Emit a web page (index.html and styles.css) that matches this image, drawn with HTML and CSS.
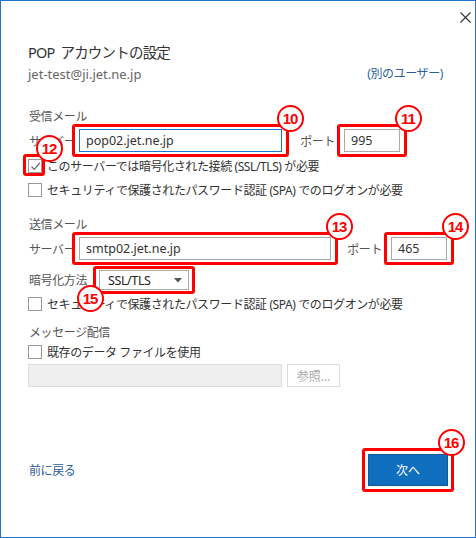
FILE: index.html
```html
<!DOCTYPE html>
<html lang="ja">

<head>
    <meta charset="UTF-8">
    <meta name="viewport" content="width=device-width, initial-scale=1.0">
    <title>POP アカウントの設定</title>
    <link rel="stylesheet" href="styles.css">
</head>

<body>
    <div class="window">
        <div class="titlebar">
            <svg class="close" width="11" height="11" viewBox="0 0 11 11">
                <path d="M0.5 0.5 L10.5 10.5 M10.5 0.5 L0.5 10.5" stroke="#333" stroke-width="1.1" fill="none" />
            </svg>
        </div>

        <h1 class="title">POP アカウントの設定</h1>
        <div class="account">
            <span class="email">jet-test@ji.jet.ne.jp</span>
            <a class="link" href="#">(別のユーザー)</a>
        </div>

        <!-- 受信メール -->
        <div class="section-label recv-label">受信メール</div>
        <div class="row">
            <span class="field-label">サーバー</span>
            <div class="mark">
                <input class="text focus w-recv" type="text" value="pop02.jet.ne.jp">
                <span class="badge">10</span>
            </div>
            <span class="port-label">ポート</span>
            <div class="mark">
                <input class="text w-port" type="text" value="995">
                <span class="badge">11</span>
            </div>
        </div>
        <div class="check-row first">
            <span class="check-wrap">
                <span class="checkbox checked">
                    <svg width="11" height="11" viewBox="0 0 11 11">
                        <path d="M1.5 5.5 L4.3 8.3 L9.8 2" stroke="#666" stroke-width="1.2" fill="none" />
                    </svg>
                </span>
                <span class="check-mark"><span class="badge">12</span></span>
            </span>
            <span>このサーバーでは暗号化された接続 (SSL/TLS) が必要</span>
        </div>
        <div class="check-row">
            <span class="checkbox"></span>
            <span>セキュリティで保護されたパスワード認証 (SPA) でのログオンが必要</span>
        </div>

        <!-- 送信メール -->
        <div class="section-label send-label">送信メール</div>
        <div class="row">
            <span class="field-label">サーバー</span>
            <div class="mark">
                <input class="text w-send" type="text" value="smtp02.jet.ne.jp">
                <span class="badge">13</span>
            </div>
            <span class="port-label">ポート</span>
            <div class="mark">
                <input class="text w-port" type="text" value="465">
                <span class="badge">14</span>
            </div>
        </div>
        <div class="row select-row">
            <span class="field-label wide">暗号化方法</span>
            <div class="mark">
                <div class="select">
                    <span>SSL/TLS</span>
                    <svg width="8" height="5" viewBox="0 0 8 5">
                        <path d="M0 0 H8 L4 4.5 Z" fill="#555" />
                    </svg>
                </div>
                <span class="badge bottom-left">15</span>
            </div>
        </div>
        <div class="check-row third">
            <span class="checkbox"></span>
            <span>セキュリティで保護されたパスワード認証 (SPA) でのログオンが必要</span>
        </div>

        <!-- メッセージ配信 -->
        <div class="section-label msg-label">メッセージ配信</div>
        <div class="check-row">
            <span class="checkbox"></span>
            <span>既存のデータ ファイルを使用</span>
        </div>
        <div class="file-row">
            <input class="text disabled" type="text" disabled>
            <button class="browse" disabled>参照...</button>
        </div>

        <div class="footer">
            <a class="link back" href="#">前に戻る</a>
            <div class="mark">
                <button class="next">次へ</button>
                <span class="badge last">16</span>
            </div>
        </div>
    </div>
</body>

</html>
```

FILE: styles.css
```css
* {
    margin: 0;
    padding: 0;
    box-sizing: border-box;
}

html,
body {
    height: 100%;
}

body {
    font-family: "Noto Sans", "Noto Sans CJK JP", sans-serif;
    font-size: 12px;
    color: #333;
    background: #fff;
}

.window {
    width: 476px;
    height: 538px;
    border: 1px solid #1f74c8;
    padding: 0 21px 45px 27px;
    display: flex;
    flex-direction: column;
    letter-spacing: -0.4px;
}

.titlebar {
    height: 41px;
    display: flex;
    justify-content: flex-end;
    padding-top: 11px;
    margin-right: -17px;
}

.close {
    display: block;
}

.title {
    font-size: 14.5px;
    font-weight: normal;
    line-height: 20px;
    color: #333;
    letter-spacing: -0.8px;
    word-spacing: 3px;
}

.account {
    display: flex;
    justify-content: space-between;
    line-height: 18px;
    margin-top: 3px;
    padding-right: 11px;
}

.email {
    color: #666;
    font-size: 13px;
    letter-spacing: 0;
}

.link {
    color: #2e5e9e;
    text-decoration: none;
    font-size: 12px;
}

.section-label {
    color: #555;
    line-height: 14px;
    padding-left: 1px;
}

.recv-label {
    margin-top: 27px;
}

.send-label {
    margin-top: 16px;
}

.msg-label {
    margin-top: 10px;
}

.row {
    display: flex;
    align-items: center;
}

.select-row {
    margin-top: 1px;
}

.field-label {
    width: 44px;
    color: #555;
    padding-left: 1px;
    white-space: nowrap;
}

.field-label.wide {
    width: 65px;
}

.port-label {
    width: 48px;
    text-align: right;
    padding-right: 2px;
    color: #555;
}

.mark {
    position: relative;
    border: 3px solid #f00;
    border-radius: 3px;
    padding: 2px 4px;
}

.select-row .mark {
    padding: 1px 3px;
}

.footer .mark {
    padding: 3px;
}

.text {
    display: block;
    height: 23px;
    border: 1px solid #a9a9a9;
    padding: 0 6px;
    font-family: "Noto Sans", "Noto Sans CJK JP", sans-serif;
    font-size: 12.5px;
    color: #333;
    background: #fff;
    outline: none;
}

.text.focus {
    border-color: #1b78d0;
}

.w-recv {
    width: 203px;
}

.w-send {
    width: 252px;
}

.w-port {
    width: 56px;
}

.badge {
    position: absolute;
    top: -22px;
    right: -18px;
    width: 27px;
    height: 27px;
    border: 2px solid #f00;
    border-radius: 50%;
    background: #fff;
    color: #f00;
    font-family: "Liberation Sans", sans-serif;
    font-weight: bold;
    font-size: 15px;
    letter-spacing: -1px;
    line-height: 23px;
    text-align: center;
    padding-right: 1px;
}

.badge.bottom-left {
    top: auto;
    right: auto;
    bottom: -21px;
    left: -19px;
}

.badge.last {
    right: -14px;
}

.check-row {
    display: flex;
    align-items: center;
    height: 24px;
    gap: 5px;
}

.check-row.first {
    margin-top: -3px;
}

.check-row.third {
    margin-top: -2px;
}

.check-wrap {
    position: relative;
    display: flex;
}

.checkbox {
    width: 14px;
    height: 14px;
    border: 1px solid #999;
    background: #fff;
    display: flex;
    align-items: center;
    justify-content: center;
}

.check-mark {
    position: absolute;
    left: -5px;
    top: -5px;
    width: 22px;
    height: 22px;
    border: 3px solid #f00;
    border-radius: 3px;
}

.check-mark .badge {
    right: -21px;
}

.select {
    width: 90px;
    height: 20px;
    border: 1px solid #a9a9a9;
    display: flex;
    align-items: center;
    justify-content: space-between;
    padding: 0 6px 0 8px;
    font-size: 12.5px;
    color: #222;
}

.file-row {
    display: flex;
    gap: 5px;
}

.text.disabled {
    width: 254px;
    background: #efefef;
    border-color: #dcdcdc;
}

.browse {
    width: 53px;
    height: 23px;
    background: #fff;
    border: 1px solid #dcdcdc;
    color: #aaa;
    font-family: "Noto Sans", "Noto Sans CJK JP", sans-serif;
    font-size: 12px;
}

.footer {
    margin-top: auto;
    display: flex;
    justify-content: space-between;
    align-items: center;
}

.back {
    padding-left: 1px;
}

.next {
    display: block;
    width: 80px;
    height: 32px;
    background: #106ebe;
    border: 1px solid #0c589b;
    color: #fff;
    font-family: "Noto Sans", "Noto Sans CJK JP", sans-serif;
    font-size: 12px;
}
```
